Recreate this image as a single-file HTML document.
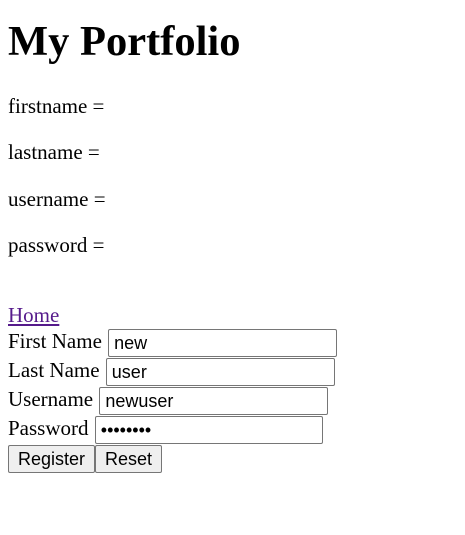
<!DOCTYPE html>
<html><head><meta charset="utf-8"><style>
html,body{margin:0;padding:0;background:#fff;}
body{padding:0 8px;font-family:"Liberation Serif",serif;font-size:21px;color:#000;}
h1{font-size:42.5px;font-weight:bold;margin:19px 0 18px;line-height:46px;}
p{margin:0;line-height:46.33px;}
.home{margin-top:35.5px;line-height:23px;}
a{color:#551a8b;}
.row{height:29px;line-height:29px;white-space:nowrap;}
input{box-sizing:border-box;height:28px;border:1px solid #767676;border-radius:2px;padding:0 5px;font-family:"Liberation Sans",sans-serif;font-size:18px;vertical-align:middle;margin:0 0 0 1px;}
button{box-sizing:border-box;height:28px;background:#efefef;border:1px solid #767676;border-radius:2px;font-family:"Liberation Sans",sans-serif;font-size:18px;padding:0 9px;margin:0;vertical-align:middle;}
</style></head><body>
<h1>My Portfolio</h1>
<p>firstname =</p>
<p>lastname =</p>
<p>username =</p>
<p>password =</p>
<div class="home"><a href="#">Home</a></div>
<div class="row">First Name <input style="width:229px" value="new"></div>
<div class="row">Last Name <input style="width:229px" value="user"></div>
<div class="row">Username <input style="width:229px" value="newuser"></div>
<div class="row">Password <input type="password" style="width:228px" value="password"></div>
<div class="row"><button style="width:87px">Register</button><button style="width:67px">Reset</button></div>
</body></html>
